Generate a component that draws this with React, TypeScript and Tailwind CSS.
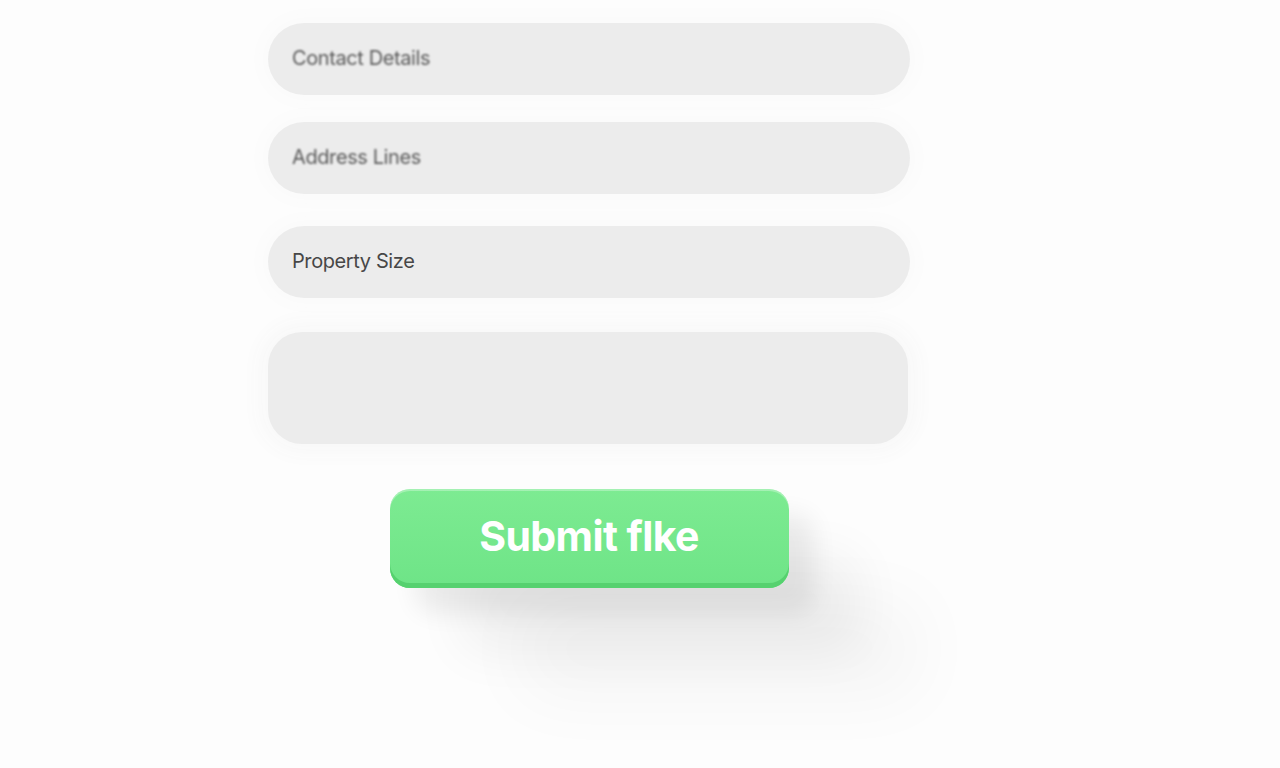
const fields = [
  { label: 'Contact Details', blurred: true, gap: 'mt-[23px]' },
  { label: 'Address Lines', blurred: true, gap: 'mt-[27px]' },
  { label: 'Property Size', blurred: false, gap: 'mt-[32px]' }
];

export default function App() {
  return (
    <div className="min-h-[768px] w-full overflow-hidden bg-[#fdfdfd] font-['Inter',sans-serif]">
      <div className="ml-[268px] flex w-[642px] flex-col">
        {fields.map((field) => (
          <div
            className={`${field.gap} flex h-[72px] items-center rounded-full bg-[#ececec] px-6 shadow-[0_0_18px_6px_rgba(250,250,250,1)]`}
            key={field.label}
          >
            <span
              className={
                field.blurred
                  ? '-mt-[2px] text-[20px] tracking-[-0.4px] text-[#5a5a5a] blur-[1px]'
                  : '-mt-[2px] text-[20px] tracking-[-0.4px] text-[#474747]'
              }
            >
              {field.label}
            </span>
          </div>
        ))}

        <div className="mt-[34px] h-[112px] w-[640px] rounded-[34px] bg-[#ececec] shadow-[0_0_20px_10px_rgba(248,248,248,1)]" />

        <button
          className="mx-auto mt-[45px] flex h-[99px] w-[399px] items-center justify-center rounded-[20px] bg-gradient-to-b from-[#7deb92] to-[#6ee487] font-['Inter',sans-serif] text-[41px] font-bold tracking-[-0.6px] text-white shadow-[inset_0_-5px_0_#56d16f,inset_0_2px_0_rgba(255,255,255,0.3),25px_25px_25px_rgba(0,0,0,0.07),70px_65px_50px_rgba(0,0,0,0.05),130px_110px_70px_rgba(0,0,0,0.035)]"
          type="button"
        >
          <span className="-mt-[4px]">Submit flke</span>
        </button>
      </div>
    </div>
  );
}
